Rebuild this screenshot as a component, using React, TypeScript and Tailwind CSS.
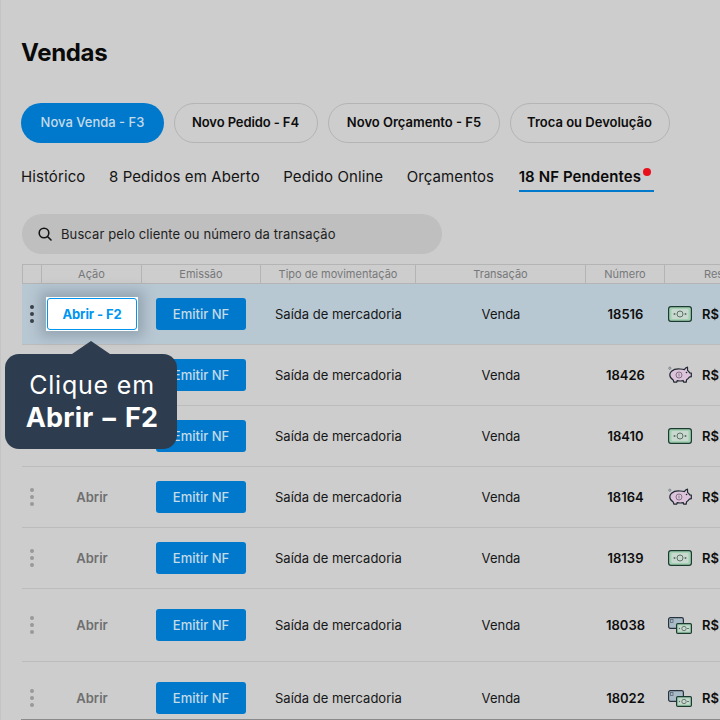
const COLS = "grid grid-cols-[20px_100px_119px_155px_170px_79px_120px]";

function Cash() {
  return (
    <svg width="24" height="16" viewBox="0 0 24 16" fill="none">
      <rect x="0.600" y="0.600" width="22.800" height="14.800" rx="2.400" fill="#a3d1b4" stroke="#1d3a30" strokeWidth="1.200" />
      <rect x="3.500" y="3" width="17" height="10" rx="1" fill="#c9d9cf" />
      <circle cx="12" cy="8" r="3" stroke="#5a7068" strokeWidth="1" />
      <circle cx="6.500" cy="8" r="1" fill="#5a7068" />
      <circle cx="17.500" cy="8" r="1" fill="#5a7068" />
    </svg>
  );
}

function Pig() {
  return (
    <svg width="24" height="18" viewBox="0 0 24 18" fill="none">
      <path d="M3.600 5.200C5.800 3.200 9 2.800 12 3c2 .1 3.500.3 4.500.6.600-1.400 1.700-2.200 3-2.400l.1 3.200c1 .6 1.700 1.500 2 2.400l1.700.3v3.600l-2.100.5c-.6 1-1.500 1.900-2.600 2.500l-.4 2.500h-2.600l-.3-1.500c-2 .4-4.200.4-6.200 0l-.3 1.500H6L5.200 14C3 12.600 1.800 11 1.800 9c0-1.500.7-2.700 1.800-3.800Z" fill="#dcc4dc" stroke="#1f2730" strokeWidth="1.200" strokeLinejoin="round" />
      <circle cx="1.800" cy="2.200" r="1.100" stroke="#6b7280" strokeWidth=".8" />
      <circle cx="18.500" cy="6.500" r=".8" fill="#1f2730" />
      <circle cx="11" cy="9" r="3" stroke="#7a6a7a" strokeWidth=".9" />
      <path d="M11 7.500v3" stroke="#7a6a7a" strokeWidth=".8" />
    </svg>
  );
}

function CardCash() {
  return (
    <svg width="24" height="17" viewBox="0 0 24 17" fill="none">
      <rect x="0.600" y="0.600" width="14.800" height="10.800" rx="1.800" fill="#aabbc8" stroke="#26323d" strokeWidth="1.200" />
      <rect x="2.500" y="2.500" width="2.500" height="3" stroke="#5c6a75" strokeWidth=".8" />
      <rect x="8.600" y="6.600" width="14.800" height="9.800" rx="1.200" fill="#a3d1b4" stroke="#1d3a30" strokeWidth="1.200" />
      <rect x="10.500" y="8.500" width="11" height="6" fill="#c9d9cf" />
      <circle cx="16" cy="11.500" r="2.200" stroke="#5a7068" strokeWidth=".9" />
      <circle cx="11.500" cy="11.500" r=".7" fill="#5a7068" />
      <path d="M19 11.500h2" stroke="#5a7068" strokeWidth=".9" />
    </svg>
  );
}

function Dots({ dark }: { dark?: boolean }) {
  const c = dark ? "bg-[#3a4148]" : "bg-[#99999c]";
  return (
    <div className="flex flex-col items-center gap-[3px]">
      <span className={`h-1 w-1 rounded-full ${c}`} />
      <span className={`h-1 w-1 rounded-full ${c}`} />
      <span className={`h-1 w-1 rounded-full ${c}`} />
    </div>
  );
}

function Row({ num, icon, height, active }: { num: string; icon: React.ReactNode; height: string; active?: boolean }) {
  return (
    <div className={`${COLS} ${height} items-center border-b border-[#bcbcbc] ${active ? "bg-[#b8c8d3]" : ""}`}>
      <div className="flex justify-center">
        <Dots dark={active} />
      </div>
      <div className="flex justify-center text-[13px] font-semibold text-[#6f6f6f]">
        {active ? (
          <span className="relative z-10 bg-white p-[1px] shadow-[0_0_12px_6px_rgba(45,60,78,0.25)]">
            <span className="flex h-[32px] w-[90px] items-center justify-center rounded-[3px] border border-[#0095f0] bg-white pt-[2px] font-bold tracking-[-0.1px] text-[#0095f0]">
              Abrir - F2
            </span>
          </span>
        ) : (
          <span className="pt-[2px]">Abrir</span>
        )}
      </div>
      <div className="flex justify-center pr-[1px]">
        <span className="flex h-[32px] w-[90px] items-center justify-center rounded-[3px] bg-[#0079cc] pt-[2px] text-[13px] font-medium text-[#c5dbe8]">
          Emitir NF
        </span>
      </div>
      <div className="pt-[2px] pl-[14px] text-[13px] text-[#161616]">Saída de mercadoria</div>
      <div className="pt-[2px] text-center text-[13px] text-[#161616]">Venda</div>
      <div className="pt-[2px] text-center text-[13px] font-semibold text-[#0d0d0d]">{num}</div>
      <div className="flex items-center gap-[10px] pl-[3px]">
        <span className="flex w-[24px] justify-center">{icon}</span>
        <span className="whitespace-nowrap pt-[2px] text-[13px] font-semibold text-[#0d0d0d]">R$ 1.250,00</span>
      </div>
    </div>
  );
}

export default function App() {
  return (
    <div className="relative h-[720px] w-[720px] overflow-hidden border-l border-[#c4c4c4] bg-[#cdcdcd] font-['Inter',sans-serif]">
      <div className="pl-[20px] pt-[38px]">
        <h1 className="text-[24px] leading-[30px] font-bold tracking-[-0.3px] text-[#0a0a0a]">Vendas</h1>

        <div className="mt-[35px] flex gap-[10px]">
          <button className="h-[40px] w-[143px] rounded-full bg-[#0079cc] text-[13px] font-medium text-[#c5dbe8]">Nova Venda - F3</button>
          <button className="h-[40px] w-[144px] rounded-full border border-[#b4b4b4] pr-[1px] text-[13px] font-semibold tracking-[-0.1px] text-[#0d0d0d]">Novo Pedido - F4</button>
          <button className="h-[40px] w-[172px] rounded-full border border-[#b4b4b4] text-[13px] font-semibold text-[#0d0d0d]">Novo Orçamento - F5</button>
          <button className="h-[40px] w-[160px] rounded-full border border-[#b4b4b4] pr-[1px] text-[13px] font-semibold text-[#0d0d0d]">Troca ou Devolução</button>
        </div>

        <nav className="mt-[20px] flex gap-[23.500px] text-[15px] leading-[20px] tracking-[0.1px] text-[#141414]">
          <span className="py-[4px]">Histórico</span>
          <span className="py-[4px]">8 Pedidos em Aberto</span>
          <span className="py-[4px]">Pedido Online</span>
          <span className="py-[4px]">Orçamentos</span>
          <span className="relative ml-[1px] w-[135px] border-b-2 border-[#0079cc] pt-[4px] pb-[3px] font-semibold text-[#0a0a0a]">
            18 NF Pendentes
            <span className="absolute top-[5px] left-[124px] h-2 w-2 rounded-full bg-[#e8101c]" />
          </span>
        </nav>

        <div className="mt-[22px] ml-[1px] flex h-[40px] w-[420px] items-center gap-[9px] rounded-full bg-[#bfbfbf] pl-[16px]">
          <svg width="14" height="14" viewBox="0 0 14 14" fill="none" stroke="#141414" strokeWidth="1.600">
            <circle cx="6" cy="6" r="4.800" />
            <path d="m9.500 9.500 3.500 3.500" strokeLinecap="round" />
          </svg>
          <span className="pt-[2px] text-[13px] tracking-[0.1px] text-[#1e1e1e]">Buscar pelo cliente ou número da transação</span>
        </div>

        <div className="mt-[10px] ml-[1px] w-[780px]">
          <div className={`${COLS} h-[20px] items-center border-y border-[#b4b4b4] text-center text-[11px] text-[#77787a]`}>
            <div className="h-full border-x border-[#b4b4b4]" />
            <div className="flex h-full items-center justify-center border-r border-[#b4b4b4]">Ação</div>
            <div className="flex h-full items-center justify-center border-r border-[#b4b4b4]">Emissão</div>
            <div className="flex h-full items-center justify-center border-r border-[#b4b4b4]">Tipo de movimentação</div>
            <div className="flex h-full items-center justify-center border-r border-[#b4b4b4]">Transação</div>
            <div className="flex h-full items-center justify-center border-r border-[#b4b4b4]">Número</div>
            <div className="pl-[39px] text-left">Resumo</div>
          </div>
          <Row num="18516" icon={<Cash />} height="h-[61px]" active />
          <Row num="18426" icon={<Pig />} height="h-[61px]" />
          <Row num="18410" icon={<Cash />} height="h-[61px]" />
          <Row num="18164" icon={<Pig />} height="h-[61px]" />
          <Row num="18139" icon={<Cash />} height="h-[61px]" />
          <Row num="18038" icon={<CardCash />} height="h-[73px]" />
          <Row num="18022" icon={<CardCash />} height="h-[73px]" />
        </div>
      </div>

      <div className="absolute right-0 bottom-0 left-[20px] h-[1px] bg-[#8a8a8a]" />

      <div className="absolute top-[354px] left-[4px] z-20 flex h-[95px] w-[172px] flex-col items-center justify-center rounded-[14px] bg-[#2d3c4e] pl-[2px] text-white">
        <span className="absolute -top-[13px] left-[67px] h-0 w-0 border-x-[19px] border-b-[13px] border-x-transparent border-b-[#2d3c4e]" />
        <span className="text-[25px] leading-[32px] tracking-[0.8px] font-normal">Clique em</span>
        <span className="pt-[1px] text-[27px] leading-[32px] font-bold tracking-[0.2px]">Abrir − F2</span>
      </div>
    </div>
  );
}
